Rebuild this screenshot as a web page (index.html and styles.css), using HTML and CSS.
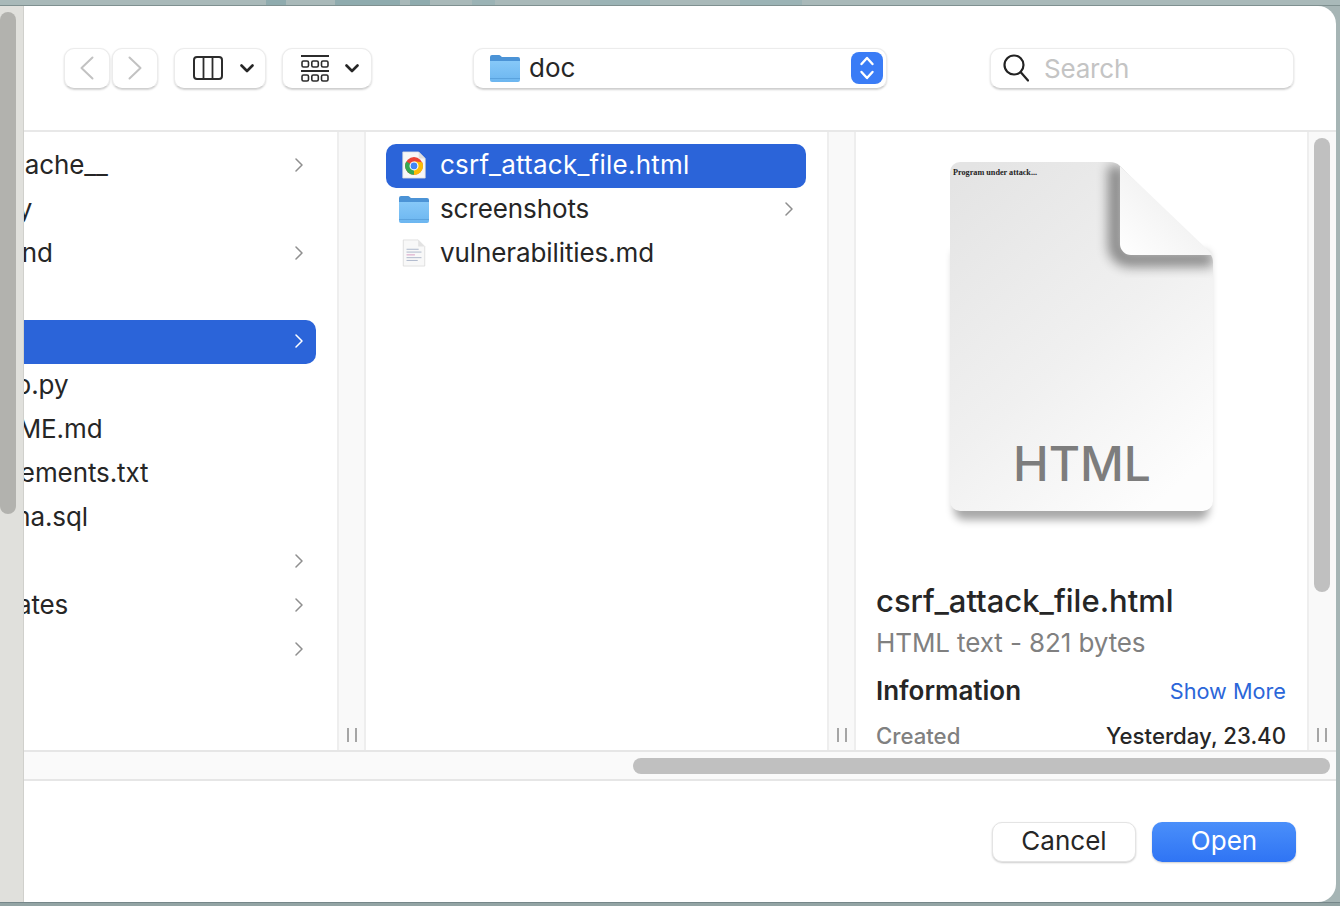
FILE: index.html
```html
<!DOCTYPE html>
<html>

<head>
  <meta charset="utf-8">
  <title>Open</title>
  <link rel="stylesheet" href="styles.css">
</head>

<body>
  <svg class="defs" width="0" height="0">
    <defs>
      <linearGradient id="folderBody" x1="0" y1="0" x2="0" y2="1">
        <stop offset="0" stop-color="#86c8f8" />
        <stop offset="1" stop-color="#6cb6f0" />
      </linearGradient>
      <linearGradient id="pageFill" x1="0.1" y1="0" x2="0.75" y2="1">
        <stop offset="0" stop-color="#e4e4e4" />
        <stop offset="0.55" stop-color="#f0f0f0" />
        <stop offset="1" stop-color="#fdfdfd" />
      </linearGradient>
      <linearGradient id="foldFill" x1="0" y1="1" x2="0.9" y2="0.1">
        <stop offset="0" stop-color="#ffffff" />
        <stop offset="0.55" stop-color="#f4f4f4" />
        <stop offset="1" stop-color="#cfcfcf" />
      </linearGradient>
      <clipPath id="pageClip">
        <path d="M10 20a10 10 0 0 1 10-10h150c4 0 7 1 10 4l90 88c2 2 3 5 3 8v239a10 10 0 0 1-10 10H20a10 10 0 0 1-10-10z" />
      </clipPath>
      <filter id="soft" x="-20%" y="-20%" width="140%" height="140%">
        <feGaussianBlur stdDeviation="6" />
      </filter>
      <filter id="softer" x="-20%" y="-20%" width="140%" height="140%">
        <feGaussianBlur stdDeviation="4" />
      </filter>
      <symbol id="folder" viewBox="0 0 30 28">
        <path d="M0 3a2 2 0 0 1 2-2h7c1.500 0 2 2 3.500 2H28a2 2 0 0 1 2 2v6H0z" fill="#4b93d6" />
        <path d="M0 7h30v19a2 2 0 0 1-2 2H2a2 2 0 0 1-2-2z" fill="url(#folderBody)" />
        <path d="M0 24.500h30" stroke="#5ba3de" stroke-width="1" />
      </symbol>
      <symbol id="chevron" viewBox="0 0 8 14">
        <path d="M1 1l6 6-6 6" fill="none" stroke="currentColor" stroke-width="1.500" stroke-linecap="round" stroke-linejoin="round" />
      </symbol>
      <symbol id="caret" viewBox="0 0 14 9">
        <path d="M1.500 1.500L7 7l5.500-5.500" fill="none" stroke="#262626" stroke-width="2.600" stroke-linecap="round" stroke-linejoin="round" />
      </symbol>
    </defs>
  </svg>

  <div class="screen">
    <div class="wall-top"></div>
    <div class="middle">
      <div class="outer-gutter">
        <div class="outer-thumb"></div>
      </div>

      <div class="dialog">
        <div class="toolbar">
          <button class="tool nav">
            <svg width="14" height="24" viewBox="0 0 14 24"><path d="M12.500 1.500L1.500 12l11 10.500" fill="none" stroke="#c2c2c2" stroke-width="2" stroke-linecap="round" stroke-linejoin="round" /></svg>
          </button>
          <button class="tool nav next">
            <svg width="14" height="24" viewBox="0 0 14 24"><path d="M1.500 1.500l11 10.500-11 10.500" fill="none" stroke="#c2c2c2" stroke-width="2" stroke-linecap="round" stroke-linejoin="round" /></svg>
          </button>
          <button class="tool view">
            <svg width="30" height="24" viewBox="0 0 30 24">
              <rect x="1" y="1" width="28" height="22" rx="3" fill="none" stroke="#2c2c2c" stroke-width="2" />
              <path d="M10.500 1v22M19.500 1v22" stroke="#2c2c2c" stroke-width="1.800" />
            </svg>
            <svg class="caret"><use href="#caret" /></svg>
          </button>
          <button class="tool group">
            <svg width="28" height="27" viewBox="0 0 28 27" fill="none" stroke="#2c2c2c">
              <path d="M0 1h28M0 16h28" stroke-width="1.800" />
              <g stroke-width="1.600">
                <rect x="1" y="6" width="6.500" height="6" rx="1.500" />
                <rect x="10.800" y="6" width="6.500" height="6" rx="1.500" />
                <rect x="20.500" y="6" width="6.500" height="6" rx="1.500" />
                <rect x="1" y="20" width="6.500" height="6" rx="1.500" />
                <rect x="10.800" y="20" width="6.500" height="6" rx="1.500" />
                <rect x="20.500" y="20" width="6.500" height="6" rx="1.500" />
              </g>
            </svg>
            <svg class="caret"><use href="#caret" /></svg>
          </button>

          <div class="tool popup">
            <svg class="popup-folder"><use href="#folder" /></svg>
            <span class="popup-label">doc</span>
            <span class="stepper">
              <svg width="16" height="26" viewBox="0 0 16 26" fill="none" stroke="#fff" stroke-width="2.400" stroke-linecap="round" stroke-linejoin="round">
                <path d="M2.500 9L8 3l5.500 6M2.500 17L8 23l5.500-6" />
              </svg>
            </span>
          </div>

          <div class="tool search">
            <svg width="26" height="28" viewBox="0 0 26 28" fill="none" stroke="#222" stroke-width="2.200" stroke-linecap="round">
              <circle cx="11" cy="11" r="9.500" />
              <path d="M18 18.500l7 8" />
            </svg>
            <span class="search-hint">Search</span>
          </div>
        </div>

        <div class="browser">
          <div class="column first">
            <div class="list shifted">
              <div class="row"><span class="name nudge-cache">__pycache__</span><svg class="chev"><use href="#chevron" /></svg></div>
              <div class="row"><span class="name">history</span></div>
              <div class="row"><span class="name">frontend</span><svg class="chev"><use href="#chevron" /></svg></div>
              <div class="row"><span class="name">.env</span></div>
              <div class="row selected"><span class="name">doc</span><svg class="chev"><use href="#chevron" /></svg></div>
              <div class="row"><span class="name nudge-setup">setup.py</span></div>
              <div class="row"><span class="name">README.md</span></div>
              <div class="row"><span class="name">requirements.txt</span></div>
              <div class="row"><span class="name">schema.sql</span></div>
              <div class="row"><span class="name">src</span><svg class="chev"><use href="#chevron" /></svg></div>
              <div class="row"><span class="name">templates</span><svg class="chev"><use href="#chevron" /></svg></div>
              <div class="row"><span class="name">tests</span><svg class="chev"><use href="#chevron" /></svg></div>
            </div>
          </div>
          <div class="gutter"><div class="grip"><i></i><i></i></div></div>

          <div class="column second">
            <div class="list">
              <div class="row selected">
                <svg class="file-icon" viewBox="0 0 30 30">
                  <path d="M3 1h17l7 7v21H3z" fill="#f7f7f7" stroke="#dcdcdc" stroke-width="0.800" />
                  <path d="M20 1v7h7z" fill="#dedede" />
                  <circle cx="15" cy="16" r="9.500" fill="#ea4335" />
                  <path d="M15 16L6.800 11.200A9.500 9.500 0 0 0 15 25.500z" fill="#34a853" />
                  <path d="M15 16v9.500A9.500 9.500 0 0 0 23.800 12L15 11z" fill="#fbbc05" />
                  <circle cx="15" cy="16" r="4.800" fill="#fff" />
                  <circle cx="15" cy="16" r="3.600" fill="#4285f4" />
                </svg>
                <span class="name">csrf_attack_file.html</span>
              </div>
              <div class="row">
                <svg class="file-icon"><use href="#folder" /></svg>
                <span class="name">screenshots</span>
                <svg class="chev"><use href="#chevron" /></svg>
              </div>
              <div class="row">
                <svg class="file-icon" viewBox="0 0 30 30">
                  <path d="M3.500 1h16l7 7v21h-23z" fill="#f8f8f8" stroke="#d8d8d8" stroke-width="0.800" />
                  <path d="M19.500 1v7h7z" fill="#e2e2e2" />
                  <path d="M7 11h13M7 14h16M7 20h16M7 23h12" stroke="#a9b4c8" stroke-width="1" />
                  <path d="M7 17h9" stroke="#d79ac0" stroke-width="1" />
                </svg>
                <span class="name">vulnerabilities.md</span>
              </div>
            </div>
          </div>
          <div class="gutter"><div class="grip"><i></i><i></i></div></div>

          <div class="column preview">
            <svg class="preview-page" width="284" height="378" viewBox="0 0 284 378">
              <path d="M14 100H269V358a10 10 0 0 1-10 10H24a10 10 0 0 1-10-10z" fill="#000" opacity="0.34" filter="url(#softer)" />
              <path d="M10 20a10 10 0 0 1 10-10h150c4 0 7 1 10 4l90 88c2 2 3 5 3 8v239a10 10 0 0 1-10 10H20a10 10 0 0 1-10-10z" fill="url(#pageFill)" />
              <g clip-path="url(#pageClip)">
                <path d="M176 14v80a13 13 0 0 0 13 13h84" fill="none" stroke="#000" stroke-width="16" opacity="0.42" filter="url(#soft)" />
              </g>
              <path d="M180 14l91 87c1 1 1 2 1 2h-81a11 11 0 0 1-11-11z" fill="url(#foldFill)" />
              <text class="page-caption" x="13" y="23">Program under attack...</text>
              <text class="page-kind" x="142" y="329">HTML</text>
            </svg>
            <div class="doc-name">csrf_attack_file.html</div>
            <div class="doc-kind">HTML text - 821 bytes</div>
            <div class="info-head">
              <span class="info-title">Information</span>
              <span class="show-more">Show More</span>
            </div>
            <div class="info-row">
              <span class="info-key">Created</span>
              <span class="info-value">Yesterday, 23.40</span>
            </div>
          </div>
          <div class="gutter last">
            <div class="col-thumb"></div>
            <div class="grip"><i></i><i></i></div>
          </div>
        </div>

        <div class="hscroll">
          <div class="hscroll-thumb"></div>
        </div>

        <div class="footer">
          <button class="btn">Cancel</button>
          <button class="btn primary">Open</button>
        </div>
      </div>

      <div class="wall-right"></div>
    </div>
    <div class="wall-bottom"></div>
  </div>
</body>

</html>
```
FILE: styles.css
```css
* {
  box-sizing: border-box;
}

html,
body {
  margin: 0;
  height: 100%;
  overflow: hidden;
}

body {
  font-family: "Inter", "Liberation Sans", sans-serif;
  font-size: 26px;
  color: #262626;
  background: #a6b5b5;
}

.defs {
  position: absolute;
}

.screen {
  display: flex;
  flex-direction: column;
  width: 1340px;
  height: 906px;
}

/* wallpaper strips */
.wall-top {
  height: 6px;
  flex: none;
  border-bottom: 1px solid #7f9090;
  background: linear-gradient(90deg,
      #a9b9b9 266px, #8fabae 266px, #8fabae 286px, #a9b9b9 286px,
      #a9b9b9 335px, #8fabae 335px, #8fabae 400px, #a9b9b9 400px,
      #a9b9b9 410px, #8fabae 410px, #8fabae 430px, #a9b9b9 430px,
      #a9b9b9 472px, #9bb3b5 472px, #9bb3b5 495px, #a9b9b9 495px,
      #a9b9b9 590px, #9bb3b5 590px, #9bb3b5 650px, #a9b9b9 650px,
      #a9b9b9 740px, #9bb3b5 740px, #9bb3b5 802px, #a9b9b9 802px);
}

.wall-right {
  width: 4px;
  flex: none;
  background: #a6b5b5;
}

.wall-bottom {
  height: 4px;
  flex: none;
  border-top: 1px solid #76878a;
  background: #93a4a4;
}

.middle {
  flex: 1;
  display: flex;
  min-height: 0;
}

.outer-gutter {
  width: 24px;
  flex: none;
  padding-top: 6px;
  background: #e0e0dc;
  border-right: 1px solid #d0d0cc;
}

.outer-thumb {
  width: 16px;
  height: 502px;
  border-radius: 8px;
  background: #b2b2ae;
}

.dialog {
  flex: 1;
  display: flex;
  flex-direction: column;
  min-width: 0;
  background: #fff;
  border-radius: 0 18px 18px 0;
  overflow: hidden;
}

/* toolbar */
.toolbar {
  height: 124px;
  flex: none;
  display: flex;
  align-items: center;
  padding: 0 42px 0 40px;
}

.tool {
  height: 41px;
  display: flex;
  align-items: center;
  padding: 0;
  font: inherit;
  background: #fff;
  border: 1px solid #ececec;
  border-bottom-color: #d0d0d0;
  border-radius: 10px;
  box-shadow: 0 1px 2px rgba(0, 0, 0, 0.18);
}

.nav {
  width: 46px;
  justify-content: center;
}

.next {
  margin-left: 2px;
}

.view {
  width: 92px;
  margin-left: 16px;
  padding-left: 18px;
  gap: 17px;
}

.group {
  width: 90px;
  margin-left: 16px;
  padding-left: 18px;
  gap: 16px;
}

.caret {
  width: 14px;
  height: 9px;
}

.popup {
  width: 414px;
  margin-left: 101px;
  padding: 0 3px 0 16px;
}

.popup-folder {
  width: 30px;
  height: 28px;
}

.popup-label {
  margin-left: 9px;
  padding-bottom: 2px;
}

.stepper {
  width: 32px;
  height: 32px;
  margin-left: auto;
  display: flex;
  align-items: center;
  justify-content: center;
  border-radius: 8px;
  background: #3a7cf6;
}

.search {
  width: 304px;
  margin-left: auto;
  padding-left: 12px;
  gap: 15px;
}

.search-hint {
  color: #c4c4c4;
  letter-spacing: -0.2px;
}

/* columns */
.browser {
  flex: 1;
  display: flex;
  min-height: 0;
  border-top: 2px solid #e8e8e8;
  border-bottom: 2px solid #e6e6e6;
}

.column {
  overflow: hidden;
}

.first {
  width: 313px;
}

.second {
  width: 461px;
}

.preview {
  width: 451px;
  padding: 20px 21px 0 20px;
}

.list {
  padding: 12px 21px 0 20px;
}

.shifted {
  margin-left: -75px;
  padding-left: 0;
}

.row {
  height: 44px;
  display: flex;
  align-items: center;
  padding: 0 13px;
  border-radius: 10px;
  white-space: nowrap;
}

.shifted .row {
  padding-left: 0;
}

.row.selected {
  color: #fff;
  background: #2b64d9;
}

.name {
  padding-bottom: 3px;
  letter-spacing: -0.1px;
}

.second .selected .name {
  letter-spacing: 0.25px;
}

.nudge-cache {
  margin-left: 7px;
}

.nudge-setup {
  margin-left: 14px;
}

.file-icon {
  width: 30px;
  height: 28px;
  flex: none;
  margin-right: 11px;
  margin-top: -2px;
}

.chev {
  width: 8px;
  height: 14px;
  margin-left: auto;
  margin-top: -2px;
  color: #8f8f8f;
}

.selected .chev {
  color: #fff;
}

.gutter {
  width: 29px;
  flex: none;
  display: flex;
  flex-direction: column;
  justify-content: flex-end;
  align-items: center;
  background: #f9f9f9;
  border-left: 2px solid #eeeeee;
  border-right: 2px solid #eeeeee;
}

.gutter.last {
  border-right: 0;
  justify-content: space-between;
  align-items: flex-start;
  padding: 6px 0 0 5px;
}

.grip {
  display: flex;
  gap: 6px;
  margin-bottom: 8px;
}

.last .grip {
  margin-left: 3px;
}

.grip i {
  width: 2px;
  height: 14px;
  background: #a5a5a5;
}

.col-thumb {
  width: 16px;
  height: 454px;
  border-radius: 8px;
  background: #c0c0c0;
}

/* preview pane */
.preview-page {
  display: block;
  margin-left: 64px;
  overflow: visible;
}

.page-caption {
  font-family: "Liberation Serif", serif;
  font-size: 8.200px;
  font-weight: 700;
  fill: #222;
}

.page-kind {
  font-size: 48px;
  font-weight: 500;
  text-anchor: middle;
  fill: #7d7d7d;
}

.doc-name {
  margin-top: 51px;
  font-size: 31px;
  font-weight: 500;
  line-height: 40px;
}

.doc-kind {
  margin-top: 4px;
  line-height: 36px;
  letter-spacing: -0.1px;
  color: #808080;
}

.info-head,
.info-row {
  display: flex;
  justify-content: space-between;
  align-items: center;
}

.info-head {
  margin-top: 12px;
  line-height: 36px;
}

.info-title {
  font-weight: 600;
}

.show-more {
  font-size: 21.700px;
  color: #2b66d9;
}

.info-row {
  margin-top: 9px;
  line-height: 36px;
  font-size: 22.200px;
  font-weight: 500;
}

.info-key {
  color: #808080;
}

/* bottom */
.hscroll {
  height: 29px;
  flex: none;
  padding: 6px 6px 0 609px;
  background: #fafafa;
  border-bottom: 2px solid #e6e6e6;
}

.hscroll-thumb {
  height: 16px;
  border-radius: 8px;
  background: #c0c0c0;
}

.footer {
  height: 121px;
  flex: none;
  display: flex;
  justify-content: flex-end;
  align-items: center;
  gap: 16px;
  padding: 0 40px 0 0;
}

.btn {
  width: 144px;
  height: 40px;
  padding: 0 0 2px;
  font: inherit;
  color: #262626;
  background: #fff;
  border: 1px solid #e4e4e4;
  border-radius: 10px;
  box-shadow: 0 1px 2px rgba(0, 0, 0, 0.2);
}

.btn.primary {
  color: #fff;
  border: 0;
  background: linear-gradient(#4a8ffa, #2f74f4);
}
```
